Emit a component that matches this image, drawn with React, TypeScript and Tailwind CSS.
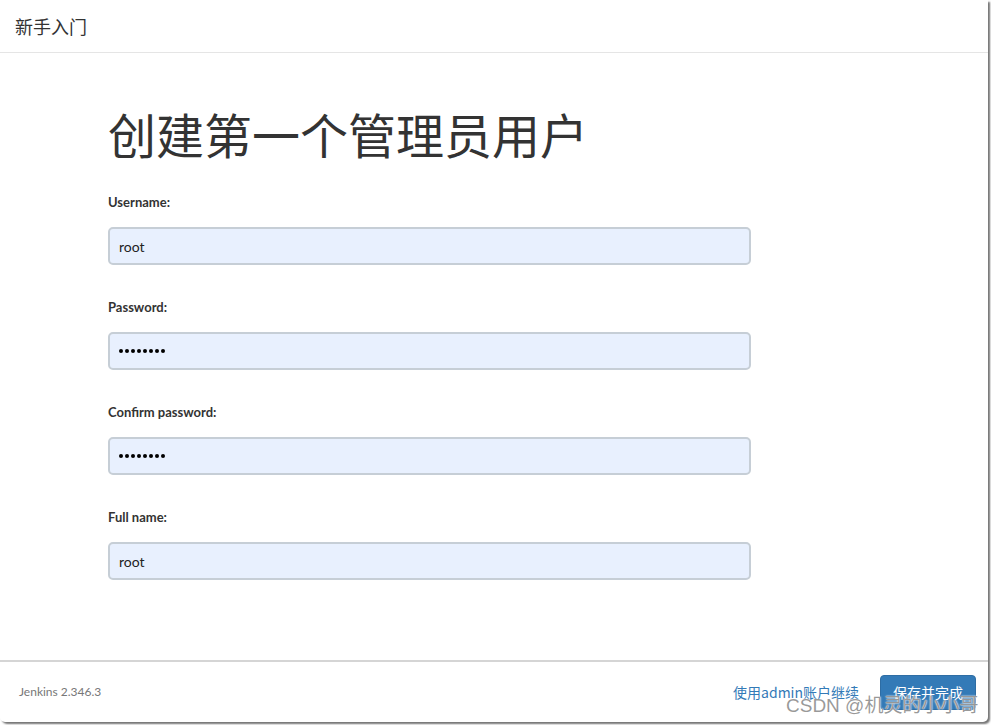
import React from "react";

const cjk = { fontFamily: '"Microsoft YaHei","Noto Sans CJK SC",sans-serif' };
const lato = { fontFamily: 'Lato,"Noto Sans CJK SC",sans-serif' };

function Field({ label, value, password }: { label: string; value: string; password?: boolean }) {
  return (
    <div className="flex flex-col">
      <label className="text-[13px] font-bold text-[#333] leading-[18px] h-[18px]" style={lato}>
        {label}
      </label>
      <div className="mt-[16px] w-[643px] h-[38px] rounded-[5px] border-2 border-[#c6ced6] bg-[#e8f0fe] flex items-center px-[9px]">
        {password ? (
          <span className="flex gap-[2px] items-center">
            {Array.from({ length: 8 }).map((_, i) => (
              <span key={i} className="w-[4px] h-[4px] rounded-full bg-black" />
            ))}
          </span>
        ) : (
          <span className="text-[14px] text-[#222]" style={lato}>{value}</span>
        )}
      </div>
    </div>
  );
}

export default function App() {
  return (
    <div className="w-[991px] h-[725px] bg-white relative overflow-hidden">
      <div className="w-[988px] h-[722px] bg-white rounded-b-[5px] shadow-[2px_2px_2px_rgba(0,0,0,0.55)] flex flex-col">
        <div className="h-[53px] border-b border-[#e5e5e5] flex items-center pl-[15px] shrink-0">
          <span className="text-[18px] text-[#333]" style={cjk}>新手入门</span>
        </div>
        <div className="flex-1 pl-[108px]">
          <h1 className="text-[48px] leading-[56px] text-[#333] mt-[52px] font-normal" style={cjk}>
            创建第一个管理员用户
          </h1>
          <div className="mt-[32px] flex flex-col gap-[33px]">
            <Field label="Username:" value="root" />
            <Field label="Password:" value="" password />
            <Field label="Confirm password:" value="" password />
            <Field label="Full name:" value="root" />
          </div>
        </div>
        <div className="h-[62px] border-t-2 border-[#d5d5d5] flex items-center justify-between pl-[19px] pr-[12px] shrink-0">
          <span className="text-[12px] text-[#777]" style={lato}>Jenkins 2.346.3</span>
          <div className="flex items-center gap-[21px]">
            <span className="text-[14px] text-[#337ab7]" style={cjk}>使用admin账户继续</span>
            <div className="h-[35px] w-[96px] rounded-[4px] bg-[#337ab7] border border-[#2e6da4] flex items-center justify-center">
              <span className="text-[14px] text-white" style={cjk}>保存并完成</span>
            </div>
          </div>
        </div>
      </div>
      <div
        className="absolute left-[786px] top-[693px] text-[19px] leading-[26px] text-[rgba(120,120,120,0.75)] whitespace-nowrap"
        style={{ fontFamily: 'Arial,"Liberation Sans","Noto Sans CJK SC",sans-serif', textShadow: "0 0 2px #fff, 0 0 1px #fff" }}
      >
        CSDN @机灵的小小哥
      </div>
    </div>
  );
}
